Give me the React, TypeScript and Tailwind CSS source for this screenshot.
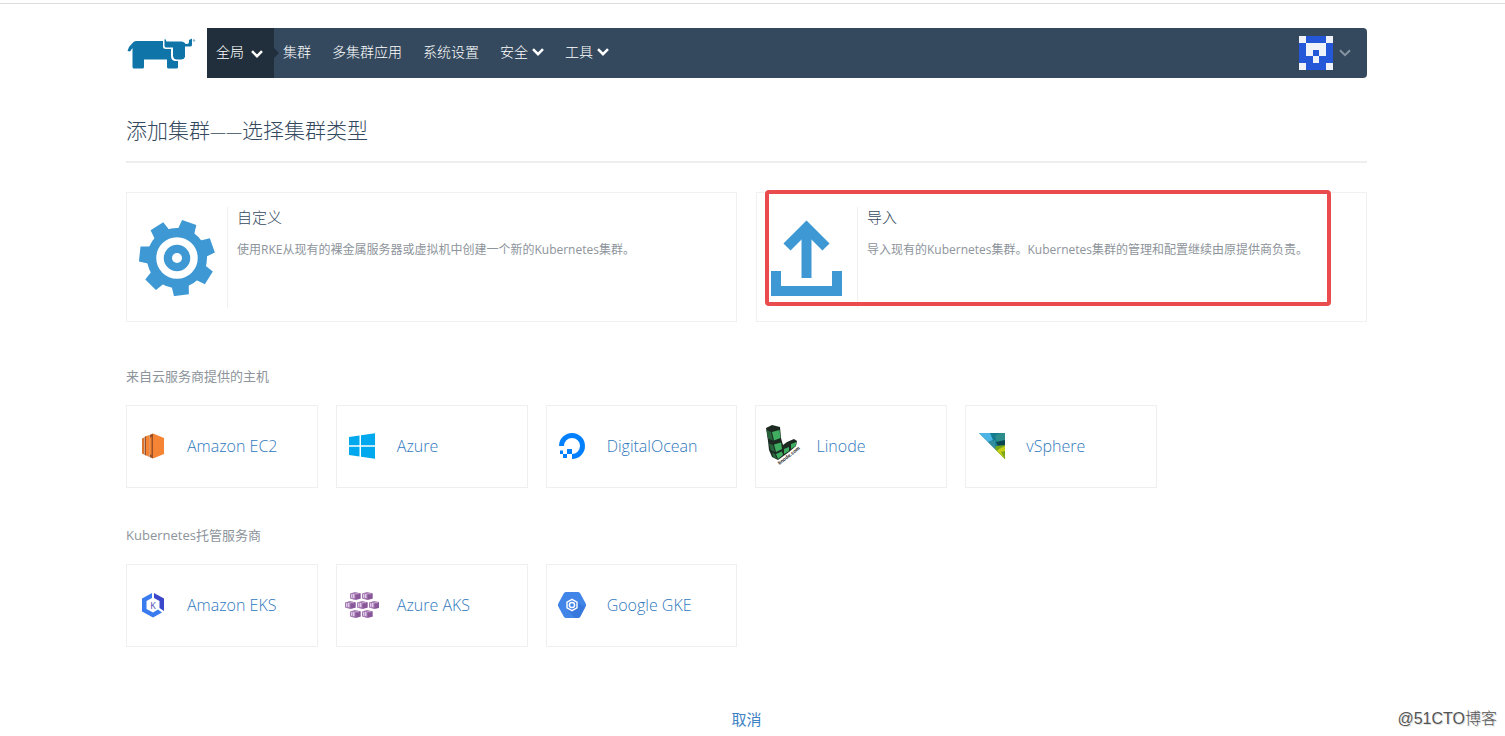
import React from 'react';

const Chevron = ({ className }: { className: string }) => (
  <svg viewBox="0 0 12 8" className={className} fill="none" stroke="currentColor" aria-hidden="true">
    <path d="M1 1.2 L6 6.2 L11 1.2" />
  </svg>
);

const RancherLogo = () => (
  <svg viewBox="0 0 72 36" className="h-9 w-[72px]" aria-hidden="true">
    <g fill="#0f75a8">
      <path d="M.5 15 L2 11 L6 6.500 Q7 5 9 5 H36 V10.500 Q36 13 39 13 H44 V20 Q44 24.500 48 25 H51 V31 Q51 32.500 49.500 32.500 H41.500 Q40 32.500 40 31 V23.500 H17 V31 Q17 32.500 15.500 32.500 H7 Q5.500 32.500 5.500 31 V12 L3 15.500 Z" />
      <path d="M38 2.500 L39.500 5.500 H54 Q57.500 5.500 58.500 8 H60 Q62 8 62 6 V4 L65 2.500 V9 Q65 10.500 63 10.500 H58 V21 Q57 23.500 54 23.500 H50 Q46.500 23.500 46 20 V11.500 H39.500 Q37.500 11.500 37.500 10 V4 Z" />
    </g>
    <circle cx="67" cy="4.500" r="1.200" fill="#8fb9cf" />
  </svg>
);

const Avatar = () => {
  const light = [
    [0, 0], [4, 0], [1, 1], [2, 1], [3, 1], [1, 2], [3, 2], [2, 3], [0, 4], [4, 4],
  ];
  return (
    <svg viewBox="0 0 5 5" className="size-[34px]" shapeRendering="crispEdges" aria-hidden="true">
      <rect width="5" height="5" fill="#2558d9" />
      {light.map(([x, y]) => (
        <rect key={`${x}-${y}`} x={x} y={y} width="1" height="1" fill="#eff2f8" />
      ))}
    </svg>
  );
};

const Gear = () => (
  <svg viewBox="-38 -38 76 76" className="size-[76px]" aria-hidden="true">
    <g fill="#3d98d3">
      <circle r="30" />
      {[12, 63.4, 114.9, 166.3, 217.7, 269.1, 320.6].map((angle) => (
        <path key={angle} d="M-9 -24 L-7.500 -37.500 H7.500 L9 -24 Z" transform={`rotate(${angle + 7})`} />
      ))}
    </g>
    <circle r="17" fill="none" stroke="#fff" strokeWidth="7.500" />
    <circle r="5" fill="#fff" />
  </svg>
);

const Upload = () => (
  <svg viewBox="0 0 76 76" className="size-[76px]" fill="none" stroke="#3d98d3" aria-hidden="true">
    <path d="M7 51 V71 H68 V51" strokeWidth="10" />
    <path d="M37.500 58 V8" strokeWidth="10" />
    <path d="M18 27 L37.500 7.500 L57 27" strokeWidth="10" />
  </svg>
);

const Ec2 = () => (
  <svg viewBox="0 0 24 26" className="h-[26px] w-6" aria-hidden="true">
    <path d="M12 .5 L23 5 V21 L12 25.500 Z" fill="#f58534" />
    <path d="M12 .5 L8.500 2 V24 L12 25.500 Z" fill="#9d5025" />
    <path d="M5 3 L8 2.200 V23.800 L5 22.500 Z" fill="#f58534" />
    <path d="M3.500 4 L5 3 V22.500 L3.500 22 Z" fill="#9d5025" />
    <path d="M1 5.500 L3 4.500 V21.500 L1 20.500 Z" fill="#dc742e" />
    <path d="M8.500 5 L10.500 4 V22 L8.500 21 Z" fill="#f58534" />
  </svg>
);

const Windows = () => (
  <svg viewBox="0 0 26 26" className="size-[26px]" fill="#00a9ee" aria-hidden="true">
    <path d="M0 4 L10.500 2.500 V12.300 H0 Z M12 2.200 L26 .2 V12.300 H12 Z M0 13.700 H10.500 V23.500 L0 22 Z M12 13.700 H26 V25.800 L12 23.800 Z" />
  </svg>
);

const DigitalOcean = () => (
  <svg viewBox="0 0 26 26" className="size-[26px]" aria-hidden="true">
    <path d="M2.500 13 A10.500 10.500 0 1 1 13 23.500" fill="none" stroke="#0080ff" strokeWidth="5" />
    <path d="M8 16 H13 V21 H8 Z M4 21 H8 V25 H4 Z M1 17.500 H4 V21 H1 Z" fill="#0080ff" />
  </svg>
);

const Linode = () => (
  <svg viewBox="0 0 34 42" className="h-[42px] w-[34px] overflow-visible" aria-hidden="true">
    <path d="M1 3 L7 0 L15 2 L16 13 L18 20 L22 17 L29 14 L32 16 L31 21 L24 27 L13 35 L7 32 L4 25 L3 16 Z" fill="#1c2a22" />
    <path d="M7 7 L14.500 5 L15.500 13 L9 15.500 Z M9 19.500 L16 17.500 L17 24 L11 27 Z M11 29 L17 26.500 L18 30 L13 34 Z M19 24 L24 22 L24 26 L19 29 Z M26 19 L31.500 17 L30.500 21 L26 24 Z" fill="#3fae60" />
    <path d="M1.500 5 L6 7 L8 15.500 L3 13.500 Z M4 18.500 L8 20 L10 27 L5.500 25 Z M7 27.500 L10 29 L12 34 L8 32 Z" fill="#27643c" />
    <text x="0" y="0" transform="translate(14.500 40) rotate(-38)" fontFamily="Liberation Sans, sans-serif" fontSize="5" fontWeight="700" fill="#111">linode.com</text>
  </svg>
);

const VSphere = () => (
  <svg viewBox="0 0 26 26" className="size-[26px]" aria-hidden="true">
    <path d="M0 0 H26 V26 Z" fill="#147c91" />
    <path d="M0 0 H11 L14 7 L9 9 Z" fill="#4db5e5" />
    <path d="M16 3 L21 0 H26 V8 L18 9 Z" fill="#2d8d8c" />
    <path d="M17 9 L26 7 V14 L19 13 Z" fill="#0b4753" />
    <path d="M9 9 L16 7 L17 17 Z" fill="#358e9f" />
    <path d="M17 13 L26 12 V26 L16 16 Z" fill="#75a51d" />
    <path d="M20 16 L26 13 V26 L18 18 Z" fill="#c7ce16" />
    <path d="M22 19 L26 18 V26 Z" fill="#7da51a" />
  </svg>
);

const Eks = () => (
  <svg viewBox="0 0 24 26" className="h-[26px] w-6" aria-hidden="true">
    <path d="M11 1 V6 L5.500 9 V17 L12 20.500 L17 17.500 L21 20.500 L12 25.500 L1 19.500 V6.500 Z" fill="#3b7bf0" />
    <path d="M13 1 L23 6.500 V19 L18.500 16 V9 L13 6 Z" fill="#3b48cc" />
    <text x="12" y="16.500" textAnchor="middle" fontFamily="Open Sans, sans-serif" fontSize="9" fontWeight="400" fill="#4644b8">K</text>
  </svg>
);

const podPlaces = [[5, 0], [17, 0], [0, 9], [12, 9], [24, 9], [5, 18], [17, 18]];

const Aks = () => (
  <svg viewBox="0 0 34 26" className="h-[26px] w-[34px]" aria-hidden="true">
    {podPlaces.map(([x, y]) => (
      <g key={`${x}-${y}`} transform={`translate(${x} ${y})`}>
        <path d="M0 1.500 L5 0 L10.500 1.200 V6.800 L5 8 L0 6.500 Z" fill="#a77bb5" />
        <path d="M5.500 1.500 L10.500 1.500 V6.500 L5.500 7.800 Z" fill="#875798" />
        <path d="M1.800 2.200 V5.800 M3.800 2 V6" stroke="#f4ecf7" strokeWidth="1" />
        <path d="M5 1.800 H9" stroke="#d9c4e0" strokeWidth=".7" />
      </g>
    ))}
  </svg>
);

const Gke = () => (
  <svg viewBox="0 0 28 26" className="h-[26px] w-7" aria-hidden="true">
    <path d="M7.500 0 H20.500 L22 1 L28 12 V14 L22 25 L20.500 26 H7.500 L6 25 L0 14 V12 L6 1 Z" fill="#4285e8" />
    <path d="M17 9 L27 15 L22 25 L20.500 26 H17 L10 18 Z" fill="#3878dc" />
    <path d="M14 7.300 L19 10.100 V15.900 L14 18.700 L9 15.900 V10.100 Z" fill="none" stroke="#fff" strokeWidth="1.400" />
    <circle cx="14" cy="13" r="2.600" fill="#4285e8" stroke="#fff" strokeWidth="1.500" />
  </svg>
);

type Provider = { name: string; icon: React.ReactNode };

const hosts: Provider[] = [
  { name: 'Amazon EC2', icon: <Ec2 /> },
  { name: 'Azure', icon: <Windows /> },
  { name: 'DigitalOcean', icon: <DigitalOcean /> },
  { name: 'Linode', icon: <Linode /> },
  { name: 'vSphere', icon: <VSphere /> },
];

const managed: Provider[] = [
  { name: 'Amazon EKS', icon: <Eks /> },
  { name: 'Azure AKS', icon: <Aks /> },
  { name: 'Google GKE', icon: <Gke /> },
];

const ProviderSection = ({ title, providers }: { title: string; providers: Provider[] }) => (
  <section>
    <h2 className="text-[13px] leading-5 font-normal text-[#8d949b]">{title}</h2>
    <div className="mt-[19px] grid grid-cols-6 gap-[18px]">
      {providers.map((provider) => (
        <a
          key={provider.name}
          href="#"
          className="flex h-[83px] items-center gap-[9px] border border-[#efeff1] pb-[2px] text-base font-light whitespace-nowrap text-[#2f78bd]"
        >
          <span className="flex w-[51px] shrink-0 justify-center">{provider.icon}</span>
          {provider.name}
        </a>
      ))}
    </div>
  </section>
);

const TypeCard = ({ title, text, icon, marked }: { title: string; text: string; icon: React.ReactNode; marked?: boolean }) => (
  <a href="#" className="relative flex h-[130px] border border-[#f1f1f3] pt-[14px] pb-[13px]">
    <span className="flex w-[101px] shrink-0 items-center justify-center border-r border-[#f1f1f3]">{icon}</span>
    <span className="block pl-[9px]">
      <span className="block text-[15px] leading-5 text-[#34495e]">{title}</span>
      <span className="mt-[13px] block text-xs leading-5 font-normal text-[#8d949b]">{text}</span>
    </span>
    {marked && <span className="absolute -top-[3px] left-2 h-[116px] w-[566px] rounded-sm border-4 border-[#e94b4f]" />}
  </a>
);

export default function App() {
  return (
    <div className="bg-white pt-[3px] font-['Open_Sans','Noto_Sans_CJK_SC',sans-serif] font-light">
      <div className="border-t border-[#dcdcde] pt-6 pr-3">
        <div className="mx-auto w-full max-w-[1241px]">
          <header className="flex h-[50px]">
            <a href="#" aria-label="Rancher" className="flex w-[81px] shrink-0 items-center pt-[2px] pl-px">
              <RancherLogo />
            </a>
            <nav className="flex flex-1 items-center rounded-r-sm bg-[#34495e] text-sm text-white">
              <button type="button" className="relative flex h-full w-[67px] items-center gap-[7px] bg-[#212f3c] pb-[2px] pl-[9px]">
                全局
                <Chevron className="mt-1 h-2 w-3 stroke-[2.500]" />
                <span className="absolute top-5 left-full border-y-[5px] border-l-[5px] border-y-transparent border-l-[#212f3c]" />
              </button>
              <div className="ml-[9px] flex items-center gap-[21px] pb-[2px]">
                <a href="#">集群</a>
                <a href="#">多集群应用</a>
                <a href="#">系统设置</a>
                <button type="button" className="flex items-center gap-1">
                  安全
                  <Chevron className="h-2 w-3 stroke-[2.500]" />
                </button>
                <button type="button" className="flex items-center gap-1">
                  工具
                  <Chevron className="h-2 w-3 stroke-[2.500]" />
                </button>
              </div>
              <button type="button" aria-label="用户" className="mr-4 ml-auto flex items-center gap-[6px] text-[#8794a2]">
                <Avatar />
                <Chevron className="h-2 w-3 stroke-2" />
              </button>
            </nav>
          </header>

          <main>
            <h1 className="mt-[34px] border-b-2 border-[#eceef0] pb-[13px] text-[21px] leading-9 text-[#34495e]">
              添加集群<span className="text-base">——</span>选择集群类型
            </h1>
            <div className="mt-[29px] grid grid-cols-2 gap-[19px]">
              <TypeCard title="自定义" text="使用RKE从现有的裸金属服务器或虚拟机中创建一个新的Kubernetes集群。" icon={<Gear />} />
              <TypeCard title="导入" text="导入现有的Kubernetes集群。Kubernetes集群的管理和配置继续由原提供商负责。" icon={<Upload />} marked />
            </div>
            <div className="mt-11 flex flex-col gap-[37px]">
              <ProviderSection title="来自云服务商提供的主机" providers={hosts} />
              <ProviderSection title="Kubernetes托管服务商" providers={managed} />
            </div>
          </main>
        </div>
      </div>
      <footer className="grid grid-cols-[1fr_auto_1fr] pt-[60px] pr-3">
        <button type="button" className="col-start-2 text-[15px] leading-6 font-normal text-[#3b82c4]">取消</button>
        <span className="-mr-1 justify-self-end font-['Liberation_Sans','Noto_Sans_CJK_SC',sans-serif] text-base leading-6 text-[#555] [text-shadow:1px_1px_0_#ddd]">@51CTO博客</span>
      </footer>
    </div>
  );
}
